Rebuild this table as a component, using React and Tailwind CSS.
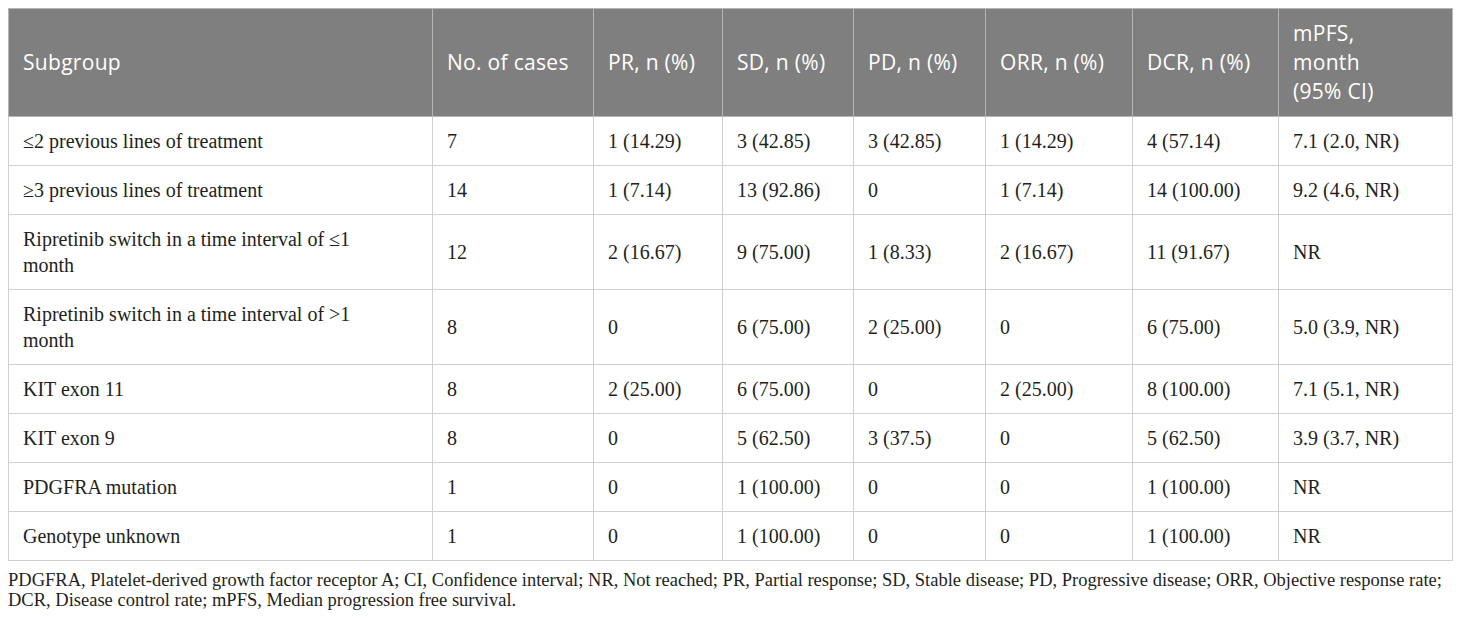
const headers = [
  'Subgroup',
  'No. of cases',
  'PR, n (%)',
  'SD, n (%)',
  'PD, n (%)',
  'ORR, n (%)',
  'DCR, n (%)',
  ['mPFS,', 'month', '(95% CI)'],
];

const widths = [424, 161, 129, 131, 132, 147, 146, 174];

const rows = [
  [['≤2 previous lines of treatment'], '7', '1 (14.29)', '3 (42.85)', '3 (42.85)', '1 (14.29)', '4 (57.14)', '7.1 (2.0, NR)'],
  [['≥3 previous lines of treatment'], '14', '1 (7.14)', '13 (92.86)', '0', '1 (7.14)', '14 (100.00)', '9.2 (4.6, NR)'],
  [['Ripretinib switch in a time interval of ≤1', 'month'], '12', '2 (16.67)', '9 (75.00)', '1 (8.33)', '2 (16.67)', '11 (91.67)', 'NR'],
  [['Ripretinib switch in a time interval of >1', 'month'], '8', '0', '6 (75.00)', '2 (25.00)', '0', '6 (75.00)', '5.0 (3.9, NR)'],
  [['KIT exon 11'], '8', '2 (25.00)', '6 (75.00)', '0', '2 (25.00)', '8 (100.00)', '7.1 (5.1, NR)'],
  [['KIT exon 9'], '8', '0', '5 (62.50)', '3 (37.5)', '0', '5 (62.50)', '3.9 (3.7, NR)'],
  [['PDGFRA mutation'], '1', '0', '1 (100.00)', '0', '0', '1 (100.00)', 'NR'],
  [['Genotype unknown'], '1', '0', '1 (100.00)', '0', '0', '1 (100.00)', 'NR'],
];

export default function App() {
  return (
    <div className="bg-white w-[1460px] h-[621px] px-2 pt-2 overflow-hidden">
      <table className="table-fixed border-collapse w-[1444px]">
        <colgroup>
          {widths.map((w, i) => (
            <col key={i} style={{ width: w }} />
          ))}
        </colgroup>
        <thead>
          <tr className="bg-[#7f7f7f]">
            {headers.map((h, i) => (
              <th
                key={i}
                className="border border-[#b4b4b4] px-[14px] py-[10px] text-left align-middle font-normal text-white text-[21px] leading-[29px] tracking-[0.3px] font-['Open_Sans',sans-serif]"
              >
                {Array.isArray(h) ? h.map((l, j) => <div key={j}>{l}</div>) : h}
              </th>
            ))}
          </tr>
        </thead>
        <tbody>
          {rows.map((r, i) => (
            <tr key={i}>
              {r.map((c, j) => (
                <td
                  key={j}
                  className="border border-[#cfcfcf] px-[14px] py-[11px] align-middle text-[#231f20] text-[20px] leading-[26px] font-['Liberation_Serif',serif]"
                >
                  {Array.isArray(c) ? c.map((l, k) => <div key={k}>{l}</div>) : c}
                </td>
              ))}
            </tr>
          ))}
        </tbody>
      </table>
      <p className="mt-[9px] text-[#231f20] text-[18.5px] leading-[20px] whitespace-nowrap font-['Liberation_Serif',serif]">
        PDGFRA, Platelet-derived growth factor receptor A; CI, Confidence interval; NR, Not reached; PR, Partial response; SD, Stable disease; PD, Progressive disease; ORR, Objective response rate;
        <br />
        DCR, Disease control rate; mPFS, Median progression free survival.
      </p>
    </div>
  );
}
